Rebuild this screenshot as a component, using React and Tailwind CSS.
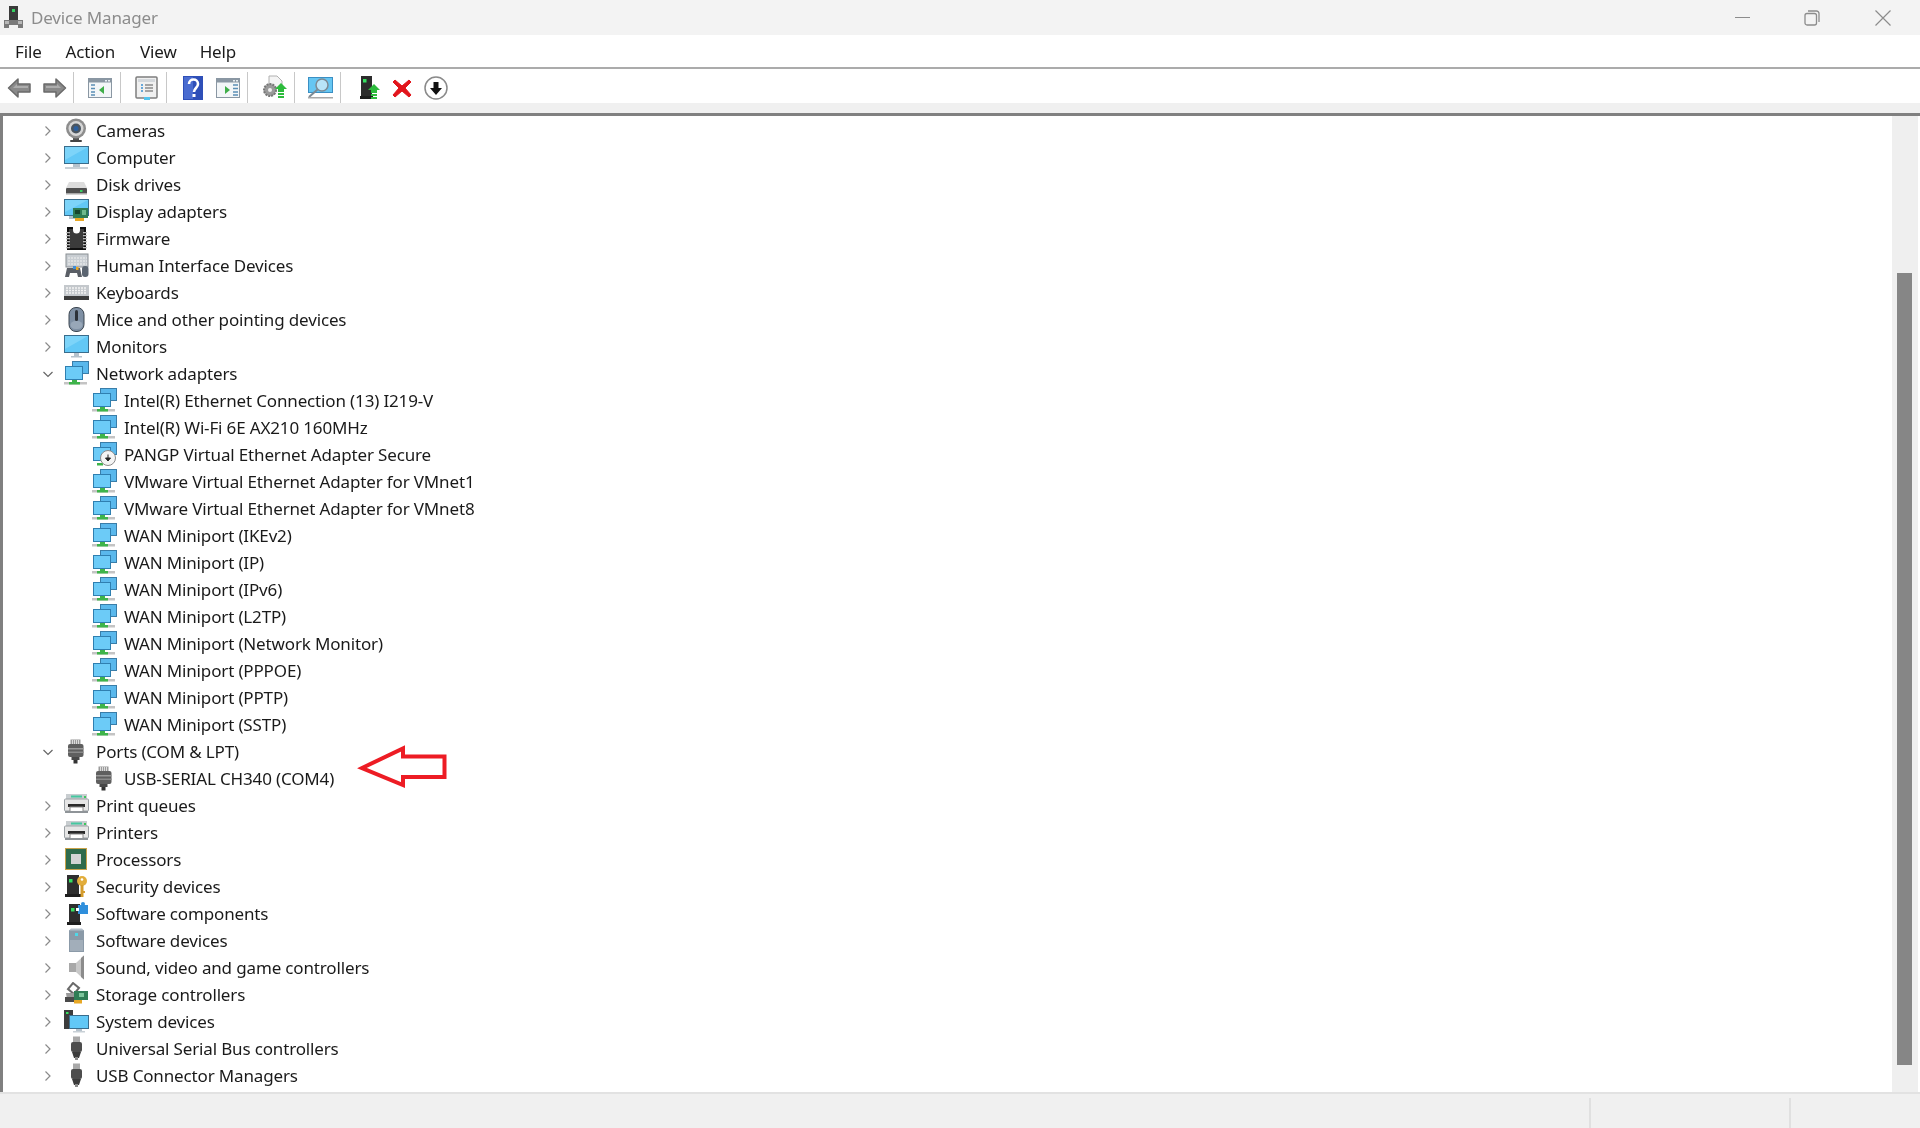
import React from "react";

const Svg = ({ w = 25, h = 25, children, className = "" }) => (
  <svg width={w} height={h} viewBox={`0 0 ${w} ${h}`} className={`shrink-0 ${className}`}>
    {children}
  </svg>
);

// ---- tree icons ----
const CameraIcon = () => (
  <Svg>
    <rect x="9" y="19" width="6" height="3" fill="#555" />
    <rect x="6" y="22" width="12" height="2" rx="1" fill="#444" />
    <circle cx="12" cy="10.5" r="10" fill="#8d8d8d" />
    <circle cx="12" cy="10.5" r="7.5" fill="#d6d6d6" />
    <circle cx="12" cy="10.5" r="5" fill="#4a5560" />
    <circle cx="12" cy="10.5" r="2.5" fill="#2b5f9e" />
  </Svg>
);

const ScreenParts = ({ x = 0, y = 1, w = 25, h = 18 }) => (
  <>
    <rect x={x} y={y} width={w} height={h} fill="#3a6d8c" />
    <rect x={x + 1} y={y + 1} width={w - 2} height={h - 2} fill="#62c8f6" />
    <polygon points={`${x + 1},${y + 1} ${x + w - 1},${y + 1} ${x + 1},${y + h - 4}`} fill="#8fdcfb" opacity="0.6" />
  </>
);

const ComputerIcon = () => (
  <Svg>
    <ScreenParts />
    <rect x="9" y="19" width="7" height="3" fill="#b5c2cc" />
    <rect x="1" y="22" width="23" height="2" fill="#c8d0d6" />
  </Svg>
);

const MonitorIcon = () => (
  <Svg>
    <ScreenParts />
    <rect x="10" y="19" width="5" height="3" fill="#b5c2cc" />
    <rect x="7" y="22" width="11" height="1.5" fill="#b5c2cc" />
  </Svg>
);

const DiskIcon = () => (
  <Svg>
    <polygon points="5,10 20,10 23,16 2,16" fill="#dcdcdc" />
    <rect x="2" y="16" width="21" height="6" rx="1" fill="#4f4f4f" />
    <rect x="2" y="21" width="21" height="1.5" fill="#a8a8a8" />
    <rect x="16" y="18" width="2.5" height="2" fill="#38d060" />
  </Svg>
);

const CardParts = ({ x = 9, y = 9 }) => (
  <>
    <rect x={x} y={y} width="15" height="10" fill="#2f7d55" />
    <rect x={x + 2} y={y + 2} width="5" height="4" fill="#17452d" />
    <rect x={x + 9} y={y + 2} width="4" height="5" fill="#6fb98e" />
    <rect x={x + 2} y={y + 10} width="9" height="3" fill="#e8a825" />
  </>
);

const DisplayIcon = () => (
  <Svg>
    <ScreenParts y={0} h={17} />
    <rect x="5" y="17" width="8" height="3" fill="#b5c2cc" />
    <CardParts />
  </Svg>
);

const FirmwareIcon = () => (
  <Svg>
    <rect x="3" y="1" width="19" height="23" fill="#111" />
    <rect x="5" y="3" width="15" height="19" fill="#3b3b3b" />
    <path d="M9 1h7v3a3.5 3.5 0 0 1-7 0z" fill="#fff" />
    {[6, 9, 12, 15, 18, 21].map((y) => (
      <g key={y}>
        <rect x="2" y={y} width="4" height="1.3" fill="#bbb" />
        <rect x="19" y={y} width="4" height="1.3" fill="#bbb" />
      </g>
    ))}
  </Svg>
);

const HidIcon = () => (
  <Svg>
    <rect x="2" y="1" width="22" height="13" fill="#c9ced3" stroke="#8a8f94" />
    <path d="M4 5h19M4 8h19M4 11h19" stroke="#f1f1f1" strokeWidth="1.2" strokeDasharray="2 1" />
    <path d="M1 24l2-9h13l2 9h-4l-1-4H6l-1 4z" fill="#5a5f66" />
    <rect x="9" y="13" width="3" height="3" fill="#3f8fd8" />
    <rect x="12" y="14" width="2.5" height="3" fill="#e8a825" />
    <rect x="18" y="13" width="6.5" height="11" rx="3" fill="#5a6470" />
  </Svg>
);

const KeyboardIcon = () => (
  <Svg>
    <rect x="0" y="5" width="25" height="11" fill="#c4c8cc" />
    <path d="M2 8h21M2 10.5h21M2 13h21" stroke="#f4f4f4" strokeWidth="1.4" strokeDasharray="2 1" />
    <rect x="0" y="16" width="25" height="4" fill="#3c3c3c" />
  </Svg>
);

const MouseIcon = () => (
  <Svg>
    <rect x="5" y="0.5" width="15" height="24" rx="7" fill="#7f90a4" stroke="#3c4650" />
    <rect x="11" y="3" width="3" height="11" rx="1.5" fill="#2c3138" />
    <rect x="6.5" y="14" width="12" height="8" rx="5" fill="#98a7b8" />
  </Svg>
);

const NetworkIcon = () => (
  <Svg>
    <rect x="8" y="0" width="17" height="13" fill="#3a7da8" />
    <rect x="9" y="1" width="15" height="11" fill="#5ab8ec" />
    <rect x="1" y="5" width="18" height="14" fill="#2f7fb0" />
    <rect x="2" y="6" width="16" height="12" fill="#6ccbf7" />
    <rect x="0" y="21" width="23" height="2.5" fill="#c4c4c4" />
    <rect x="8" y="19" width="5" height="3" fill="#3eb44a" />
    <rect x="5" y="21" width="11" height="2.5" fill="#3eb44a" />
  </Svg>
);

const PangpIcon = () => (
  <Svg>
    <rect x="8" y="0" width="17" height="13" fill="#3a7da8" />
    <rect x="9" y="1" width="15" height="11" fill="#5ab8ec" />
    <rect x="1" y="5" width="18" height="14" fill="#2f7fb0" />
    <rect x="2" y="6" width="16" height="12" fill="#6ccbf7" />
    <rect x="5" y="21" width="6" height="2.5" fill="#3eb44a" />
    <circle cx="16" cy="16" r="7.5" fill="#f4f4f4" stroke="#8a8a8a" />
    <path d="M16 12.5v6M13.5 16l2.5 3 2.5-3z" fill="#222" stroke="#222" />
  </Svg>
);

const PortIcon = () => (
  <Svg>
    <rect x="6.500" y="0.5" width="10" height="5" fill="#9a9a9a" />
    <path d="M8.500 1v4M10.500 1v4M12.500 1v4M14.500 1v4" stroke="#ddd" />
    <rect x="4" y="5" width="15.500" height="13" rx="2" fill="#5f5f5f" />
    <rect x="4" y="9" width="15.500" height="1.5" fill="#9a9a9a" />
    <rect x="4" y="12.5" width="15.500" height="1.5" fill="#8a8a8a" />
    <rect x="7.500" y="18" width="8" height="3" fill="#484848" />
    <rect x="9.500" y="21" width="4" height="3.5" fill="#333" />
  </Svg>
);

const PrinterIcon = () => (
  <Svg>
    <rect x="2" y="1" width="21" height="6" fill="#c8cdd0" />
    <rect x="7" y="2.5" width="11" height="2" fill="#45c8a0" />
    <rect x="0.5" y="6" width="24" height="12" rx="1" fill="#e6e6e6" stroke="#9ba0a4" />
    <rect x="20" y="3" width="2" height="2" fill="#3ec85a" />
    <rect x="4" y="11" width="17" height="3" fill="#2a2a2a" />
    <rect x="6" y="14" width="13" height="5" fill="#fff" stroke="#8a8a8a" />
    <rect x="1" y="18" width="23" height="2" fill="#8f9498" />
  </Svg>
);

const ProcessorIcon = () => (
  <Svg>
    <rect x="1" y="1" width="22" height="22" fill="#c8a24a" />
    <rect x="2" y="2" width="20" height="20" fill="#2f6b4c" />
    <rect x="7" y="7" width="10" height="10" fill="#d4d4d4" />
  </Svg>
);

const TowerParts = () => (
  <>
    <rect x="3" y="1" width="12" height="19" fill="#2e2e2e" />
    <rect x="5" y="5" width="3.5" height="3.5" fill="#35e060" />
    <rect x="1" y="20" width="16" height="3" fill="#1e1e1e" />
  </>
);

const SecurityIcon = () => (
  <Svg>
    <TowerParts />
    <circle cx="18" cy="7" r="5" fill="#e2ad3b" />
    <circle cx="18" cy="5.5" r="1.3" fill="#fff" />
    <rect x="16.5" y="11" width="3" height="12" fill="#d49c2c" />
    <rect x="19" y="17" width="2" height="2" fill="#d49c2c" />
  </Svg>
);

const ComponentIcon = () => (
  <Svg>
    <rect x="5" y="3" width="11" height="18" fill="#2e2e2e" />
    <rect x="7" y="7" width="3.5" height="3.5" fill="#35e060" />
    <rect x="3" y="21" width="14" height="3" fill="#1e1e1e" />
    <rect x="14" y="4" width="10" height="9" fill="#2f8fdc" />
    <rect x="17" y="1" width="4" height="4" rx="2" fill="#2f8fdc" />
    <rect x="12" y="7" width="3" height="3" fill="#fff" />
  </Svg>
);

const SoftwareDeviceIcon = () => (
  <Svg>
    <path d="M5 2h15v22H5z" fill="#8b9aa8" />
    <path d="M7 0.5h11l2 2H5z" fill="#b6c1cb" />
    <rect x="6" y="12" width="13" height="11" fill="#a2aeba" />
    <rect x="11" y="5" width="3" height="3" fill="#4fd8e8" />
  </Svg>
);

const SoundIcon = () => (
  <Svg>
    <rect x="5" y="8" width="7" height="9" fill="#a8a8a8" />
    <polygon points="12,8 20,0.5 20,24.5 12,17" fill="#c8c8c8" />
    <polygon points="17,3 20,0.5 20,24.5 17,22" fill="#8c8c8c" />
  </Svg>
);

const StorageIcon = () => (
  <Svg>
    <path d="M9 1l6 5-5 6-6-5z" fill="#fff" stroke="#6a6a6a" strokeWidth="2" />
    <path d="M2 11h11l-1 7H3z" fill="#9a9a9a" />
    <rect x="1" y="15" width="11" height="5" fill="#4a4a4a" />
    <rect x="10" y="9" width="14" height="9" fill="#2f7d55" />
    <rect x="15" y="11" width="5" height="4" fill="#7cc59b" />
    <rect x="10" y="18" width="8" height="3.5" fill="#e8a825" />
  </Svg>
);

const SystemIcon = () => (
  <Svg>
    <rect x="0" y="1" width="9" height="19" fill="#3c3c3c" />
    <rect x="2" y="3" width="2.5" height="2" fill="#35e060" />
    <rect x="5" y="6" width="20" height="14" fill="#3a6d8c" />
    <rect x="6" y="7" width="18" height="12" fill="#62c8f6" />
    <rect x="12" y="20" width="6" height="2" fill="#b5c2cc" />
    <rect x="9" y="22" width="12" height="1.5" fill="#c8d0d6" />
  </Svg>
);

const UsbIcon = () => (
  <Svg>
    <rect x="9" y="0.5" width="7" height="6" fill="#a8a8a8" />
    <rect x="7" y="6" width="11" height="10" rx="2" fill="#4d4d4d" />
    <path d="M8 16h9l-2 6h-5z" fill="#3c3c3c" />
    <rect x="11" y="21" width="3" height="3" fill="#8a8a8a" />
  </Svg>
);

// ---- toolbar icons ----
const ArrowBtn = ({ flip }) => (
  <svg width="25" height="22" viewBox="0 0 25 22" className={`shrink-0 ${flip ? "-scale-x-100" : ""}`}>
    <path d="M1.5 11L11 2v5h12v8H11v5z" fill="#8a8a8a" stroke="#6a6a6a" strokeWidth="1.5" strokeLinejoin="round" />
    <path d="M6 11l4-4v2h11v2z" fill="#adadad" />
  </svg>
);

const Sep = () => <div className="w-px h-8 bg-[#c8c8c8] shrink-0" />;

const PaneIcon = ({ right }) => (
  <Svg w={24} h={20}>
    <rect x="0.5" y="0.5" width="23" height="19" fill="#f3f6f8" stroke="#8a97a3" />
    <rect x="1" y="1" width="22" height="3.5" fill="#8a97a3" />
    <rect x="17" y="2" width="2" height="1.5" fill="#e8eef2" />
    <rect x="20" y="2" width="2" height="1.5" fill="#e8eef2" />
    {right ? (
      <>
        <polygon points="9,8 9,16 14,12" fill="#3fae49" />
        <path d="M17 7h5M17 10.5h5M17 14h5M17 17h5" stroke="#5b8fb5" strokeWidth="1.6" />
      </>
    ) : (
      <>
        <polygon points="16,8 16,16 11,12" fill="#3fae49" />
        <path d="M3 7h4M3 10.5h4M3 14h4M3 17h4" stroke="#5b8fb5" strokeWidth="1.6" />
      </>
    )}
  </Svg>
);

const PropsIcon = () => (
  <Svg w={23} h={24}>
    <rect x="1" y="1" width="21" height="21" rx="1" fill="#f0f0f0" stroke="#7d7d7d" strokeWidth="1.5" />
    <rect x="3" y="3" width="17" height="3" fill="#d4d8dc" />
    <path d="M6 9h2M6 12h2M6 15h2" stroke="#3a8fd0" strokeWidth="1.5" />
    <path d="M10 9h8M10 12h8M10 15h8" stroke="#8a8a8a" strokeWidth="1.5" />
    <rect x="9" y="21" width="6" height="3" fill="#52c4ee" />
  </Svg>
);

const HelpIcon = () => (
  <svg width="20" height="24" viewBox="0 0 20 24" className="shrink-0">
    <rect x="0" y="0" width="20" height="24" fill="#2e4fb8" />
    <rect x="1" y="1" width="9" height="22" fill="#4a6cd0" />
    <path d="M6 8c0-6 9-6 9 0 0 4-4 4-4 8" fill="none" stroke="#fff" strokeWidth="2.6" />
    <rect x="9.5" y="18" width="3" height="3" fill="#fff" />
  </svg>
);

const UpdateIcon = () => (
  <Svg w={25} h={25}>
    <path d="M7 1h8l5 5v7H7z" fill="#f4f4f4" stroke="#b0b0b0" />
    <circle cx="8" cy="15" r="6" fill="#9a9a9a" stroke="#777" strokeWidth="2" strokeDasharray="2 1" />
    <circle cx="8" cy="15" r="2" fill="#eee" />
    <polygon points="19,8 25,14 13,14" fill="#2dbb3c" />
    <rect x="16" y="14" width="6" height="3" fill="#2dbb3c" />
    <rect x="16" y="18" width="6" height="2" fill="#2dbb3c" />
    <rect x="16" y="21" width="6" height="2" fill="#2dbb3c" />
  </Svg>
);

const ScanIcon = () => (
  <Svg w={25} h={22}>
    <rect x="0" y="0" width="25" height="16" fill="#3a8fc4" />
    <rect x="1" y="1" width="23" height="14" fill="#66c6f2" />
    <circle cx="14" cy="8" r="6" fill="#b8e4f8" stroke="#7d8a94" strokeWidth="1.5" />
    <path d="M9.5 12.5L1 20" stroke="#7d8a94" strokeWidth="2" />
    <rect x="0" y="20" width="25" height="1.5" fill="#a8a8a8" />
  </Svg>
);

const EnableIcon = () => (
  <Svg w={20} h={24}>
    <rect x="1" y="0" width="11" height="20" fill="#2c2c2c" />
    <rect x="3" y="3" width="3.5" height="3.5" fill="#35e060" />
    <rect x="0" y="20" width="13" height="3" fill="#1e1e1e" />
    <polygon points="14,8 20,14 8,14" fill="#2dbb3c" />
    <rect x="11" y="14" width="6" height="3" fill="#2dbb3c" />
    <rect x="11" y="18" width="6" height="2" fill="#2dbb3c" />
    <rect x="11" y="21" width="6" height="2" fill="#2dbb3c" />
  </Svg>
);

const RemoveIcon = () => (
  <Svg w={20} h={20}>
    <path d="M3 2l7 6 7-6 2 2-6 6 6 7-2 2-7-6-7 6-2-2 6-7-6-6z" fill="#e2151c" stroke="#e2151c" />
  </Svg>
);

const DownIcon = () => (
  <Svg w={24} h={24}>
    <circle cx="12" cy="12" r="11" fill="#fff" stroke="#8a8a8a" strokeWidth="1.5" />
    <path d="M9.5 6h5v6h3.5L12 19l-6-7h3.5z" fill="#111" />
  </Svg>
);

const AppIcon = () => (
  <svg width="21" height="24" viewBox="0 0 21 24" className="shrink-0">
    <rect x="6" y="0" width="9" height="14" fill="#3a3a3a" />
    <rect x="9" y="3" width="3" height="3" fill="#35d060" />
    <path d="M1 14h19v8H15v-3H6v3H1z" fill="#7a7a7a" />
    <rect x="2" y="15" width="4" height="3" fill="#b8b8b8" />
    <rect x="15" y="15" width="4" height="3" fill="#b8b8b8" />
  </svg>
);

const Chevron = ({ open }) => (
  <svg width="16" height="16" viewBox="0 0 16 16" className="shrink-0">
    {open ? (
      <path d="M3.500 6l4.500 4.500L12.500 6" fill="none" stroke="#666" strokeWidth="1.2" />
    ) : (
      <path d="M5.500 3.500L10 8l-4.500 4.500" fill="none" stroke="#8a8a8a" strokeWidth="1.2" />
    )}
  </svg>
);

const wan = ["WAN Miniport (IKEv2)", "WAN Miniport (IP)", "WAN Miniport (IPv6)", "WAN Miniport (L2TP)", "WAN Miniport (Network Monitor)", "WAN Miniport (PPPOE)", "WAN Miniport (PPTP)", "WAN Miniport (SSTP)"];

const rows = [
  { label: "Cameras", Icon: CameraIcon },
  { label: "Computer", Icon: ComputerIcon },
  { label: "Disk drives", Icon: DiskIcon },
  { label: "Display adapters", Icon: DisplayIcon },
  { label: "Firmware", Icon: FirmwareIcon },
  { label: "Human Interface Devices", Icon: HidIcon },
  { label: "Keyboards", Icon: KeyboardIcon },
  { label: "Mice and other pointing devices", Icon: MouseIcon },
  { label: "Monitors", Icon: MonitorIcon },
  { label: "Network adapters", Icon: NetworkIcon, open: true },
  { label: "Intel(R) Ethernet Connection (13) I219-V", Icon: NetworkIcon, child: true },
  { label: "Intel(R) Wi-Fi 6E AX210 160MHz", Icon: NetworkIcon, child: true },
  { label: "PANGP Virtual Ethernet Adapter Secure", Icon: PangpIcon, child: true },
  { label: "VMware Virtual Ethernet Adapter for VMnet1", Icon: NetworkIcon, child: true },
  { label: "VMware Virtual Ethernet Adapter for VMnet8", Icon: NetworkIcon, child: true },
  ...wan.map((label) => ({ label, Icon: NetworkIcon, child: true })),
  { label: "Ports (COM & LPT)", Icon: PortIcon, open: true },
  { label: "USB-SERIAL CH340 (COM4)", Icon: PortIcon, child: true },
  { label: "Print queues", Icon: PrinterIcon },
  { label: "Printers", Icon: PrinterIcon },
  { label: "Processors", Icon: ProcessorIcon },
  { label: "Security devices", Icon: SecurityIcon },
  { label: "Software components", Icon: ComponentIcon },
  { label: "Software devices", Icon: SoftwareDeviceIcon },
  { label: "Sound, video and game controllers", Icon: SoundIcon },
  { label: "Storage controllers", Icon: StorageIcon },
  { label: "System devices", Icon: SystemIcon },
  { label: "Universal Serial Bus controllers", Icon: UsbIcon },
  { label: "USB Connector Managers", Icon: UsbIcon },
];

const App = () => {
  return (
    <div className="h-[1128px] w-[1920px] flex flex-col overflow-hidden bg-white text-[17px] tracking-[-0.15px] text-[#1a1a1a] blur-[0.3px] font-['Noto_Sans',sans-serif]">
      {/* Title bar */}
      <div className="h-[35px] bg-[#f3f3f3] flex items-center pl-[3px] shrink-0">
        <AppIcon />
        <span className="ml-[7px] text-[#8c8c8c]">Device Manager</span>
        <div className="ml-auto flex items-center pr-[29px]">
          <div className="w-[15px] h-px bg-[#8c8c8c]" />
          <svg width="16" height="16" viewBox="0 0 16 16" className="ml-[54px]">
            <rect x="1" y="3.500" width="11.500" height="11.500" rx="2" fill="none" stroke="#8c8c8c" strokeWidth="1.3" />
            <path d="M4 1h8.500a2.500 2.500 0 0 1 2.500 2.500V12" fill="none" stroke="#8c8c8c" strokeWidth="1.3" />
          </svg>
          <svg width="16" height="16" viewBox="0 0 16 16" className="ml-[55px]">
            <path d="M0.500 0.500l15 15M15.500 0.500l-15 15" stroke="#8c8c8c" strokeWidth="1.2" />
          </svg>
        </div>
      </div>

      {/* Menu bar */}
      <div className="h-[34px] flex items-center pl-[15px] pt-[2px] border-b-2 border-[#ababab] shrink-0">
        <span>File</span>
        <span className="ml-[24px]">Action</span>
        <span className="ml-[25px]">View</span>
        <span className="ml-[23px]">Help</span>
      </div>

      {/* Toolbar */}
      <div className="h-[34px] flex items-center pl-[7px] pt-[3px] shrink-0">
        <ArrowBtn />
        <div className="ml-[10px]"><ArrowBtn flip /></div>
        <div className="ml-[6px]"><Sep /></div>
        <div className="ml-[14px]"><PaneIcon /></div>
        <div className="ml-[8px]"><Sep /></div>
        <div className="ml-[14px]"><PropsIcon /></div>
        <div className="ml-[8px]"><Sep /></div>
        <div className="ml-[16px]"><HelpIcon /></div>
        <div className="ml-[13px]"><PaneIcon right /></div>
        <div className="ml-[7px]"><Sep /></div>
        <div className="ml-[14px]"><UpdateIcon /></div>
        <div className="ml-[7px]"><Sep /></div>
        <div className="ml-[13px]"><ScanIcon /></div>
        <div className="ml-[7px]"><Sep /></div>
        <div className="ml-[19px]"><EnableIcon /></div>
        <div className="ml-[12px]"><RemoveIcon /></div>
        <div className="ml-[12px]"><DownIcon /></div>
      </div>

      <div className="h-[10px] bg-[#f0f0f0] shrink-0" />

      {/* Tree + scrollbar */}
      <div className="relative flex-1 min-h-0 flex border-t-[3px] border-l-[3px] border-[#808080]">
        <div className="flex-1 pt-px">
          {rows.map(({ label, Icon, open, child }) => (
            <div key={label} className={`h-[27px] flex items-center ${child ? "pl-[89px]" : "pl-[37px]"}`}>
              {!child && <Chevron open={open} />}
              <div className={child ? "" : "ml-2"}><Icon /></div>
              <span className="ml-[7px] whitespace-nowrap">{label}</span>
            </div>
          ))}
        </div>
        <div className="w-[26px] mr-[2px] bg-[#efefef] pt-[157px] pl-[5px]">
          <div className="w-[15px] h-[792px] bg-[#868686]" />
        </div>

        {/* annotation arrow */}
        <svg width="97" height="48" viewBox="0 0 97 48" className="absolute left-[350px] top-[629px]">
          <path d="M9 23L50 3.500v8h41.500v20.500H50v8z" fill="none" stroke="#ed1c24" strokeWidth="4" />
        </svg>
      </div>

      {/* Status bar */}
      <div className="h-[36px] bg-[#f0f0f0] border-t-2 border-[#e2e2e2] flex pt-[4px] pl-[1589px] shrink-0">
        <div className="w-[200px] border-l-2 border-[#e0e0e0]" />
        <div className="w-[129px] border-l-2 border-[#e0e0e0]" />
      </div>
    </div>
  );
};

export default App;
